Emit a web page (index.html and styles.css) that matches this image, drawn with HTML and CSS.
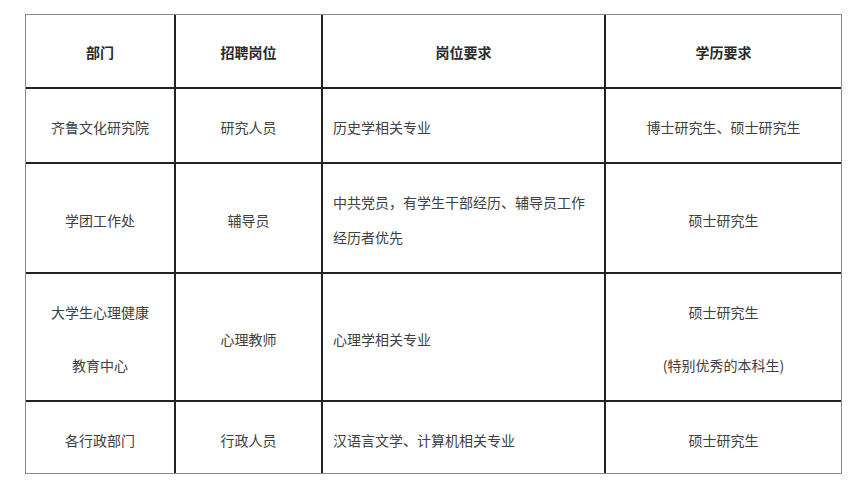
FILE: index.html
```html
<!DOCTYPE html>
<html lang="zh-CN">
<head>
<meta charset="utf-8">
<title>招聘岗位</title>
<link rel="stylesheet" href="styles.css">
</head>
<body>
<div class="page">
  <table class="jobs">
    <colgroup>
      <col class="c1"><col class="c2"><col class="c3"><col class="c4">
    </colgroup>
    <thead>
      <tr>
        <th>部门</th>
        <th>招聘岗位</th>
        <th>岗位要求</th>
        <th>学历要求</th>
      </tr>
    </thead>
    <tbody>
      <tr>
        <td>齐鲁文化研究院</td>
        <td>研究人员</td>
        <td class="left">历史学相关专业</td>
        <td>博士研究生、硕士研究生</td>
      </tr>
      <tr>
        <td>学团工作处</td>
        <td>辅导员</td>
        <td class="left">中共党员，有学生干部经历、辅导员工作经历者优先</td>
        <td>硕士研究生</td>
      </tr>
      <tr>
        <td><p>大学生心理健康</p><p>教育中心</p></td>
        <td>心理教师</td>
        <td class="left">心理学相关专业</td>
        <td><p>硕士研究生</p><p>(特别优秀的本科生)</p></td>
      </tr>
      <tr>
        <td>各行政部门</td>
        <td>行政人员</td>
        <td class="left">汉语言文学、计算机相关专业</td>
        <td>硕士研究生</td>
      </tr>
    </tbody>
  </table>
</div>
</body>
</html>
```
FILE: styles.css
```css
html, body {
  margin: 0;
  padding: 0;
  background: #ffffff;
}

.page {
  padding: 14px 0 0 25px;
  font-family: "Noto Sans CJK SC", "Noto Sans", sans-serif;
  font-size: 14px;
  color: #404040;
}

.jobs {
  border-collapse: separate;
  border-spacing: 0;
  table-layout: fixed;
  width: 815px;
  border: 1px solid #8a8a8a;
}

.c1 { width: 150px; }
.c2 { width: 147px; }
.c3 { width: 283px; }
.c4 { width: 235px; }

.jobs th,
.jobs td {
  padding: 20px 10px 17px;
  line-height: 35px;
  text-align: center;
  vertical-align: middle;
  border-right: 2px solid #222222;
  border-bottom: 2px solid #222222;
  font-weight: normal;
}

.jobs td {
  padding-top: 21px;
}

.jobs th {
  font-weight: bold;
  color: #2a2a2a;
}

.jobs tr > :last-child {
  border-right: none;
}

.jobs tbody tr:last-child > * {
  border-bottom: none;
  padding-bottom: 15px;
}

.jobs td.left {
  text-align: left;
}

.jobs p {
  margin: 0;
}

.jobs p + p {
  margin-top: 18px;
}
```
